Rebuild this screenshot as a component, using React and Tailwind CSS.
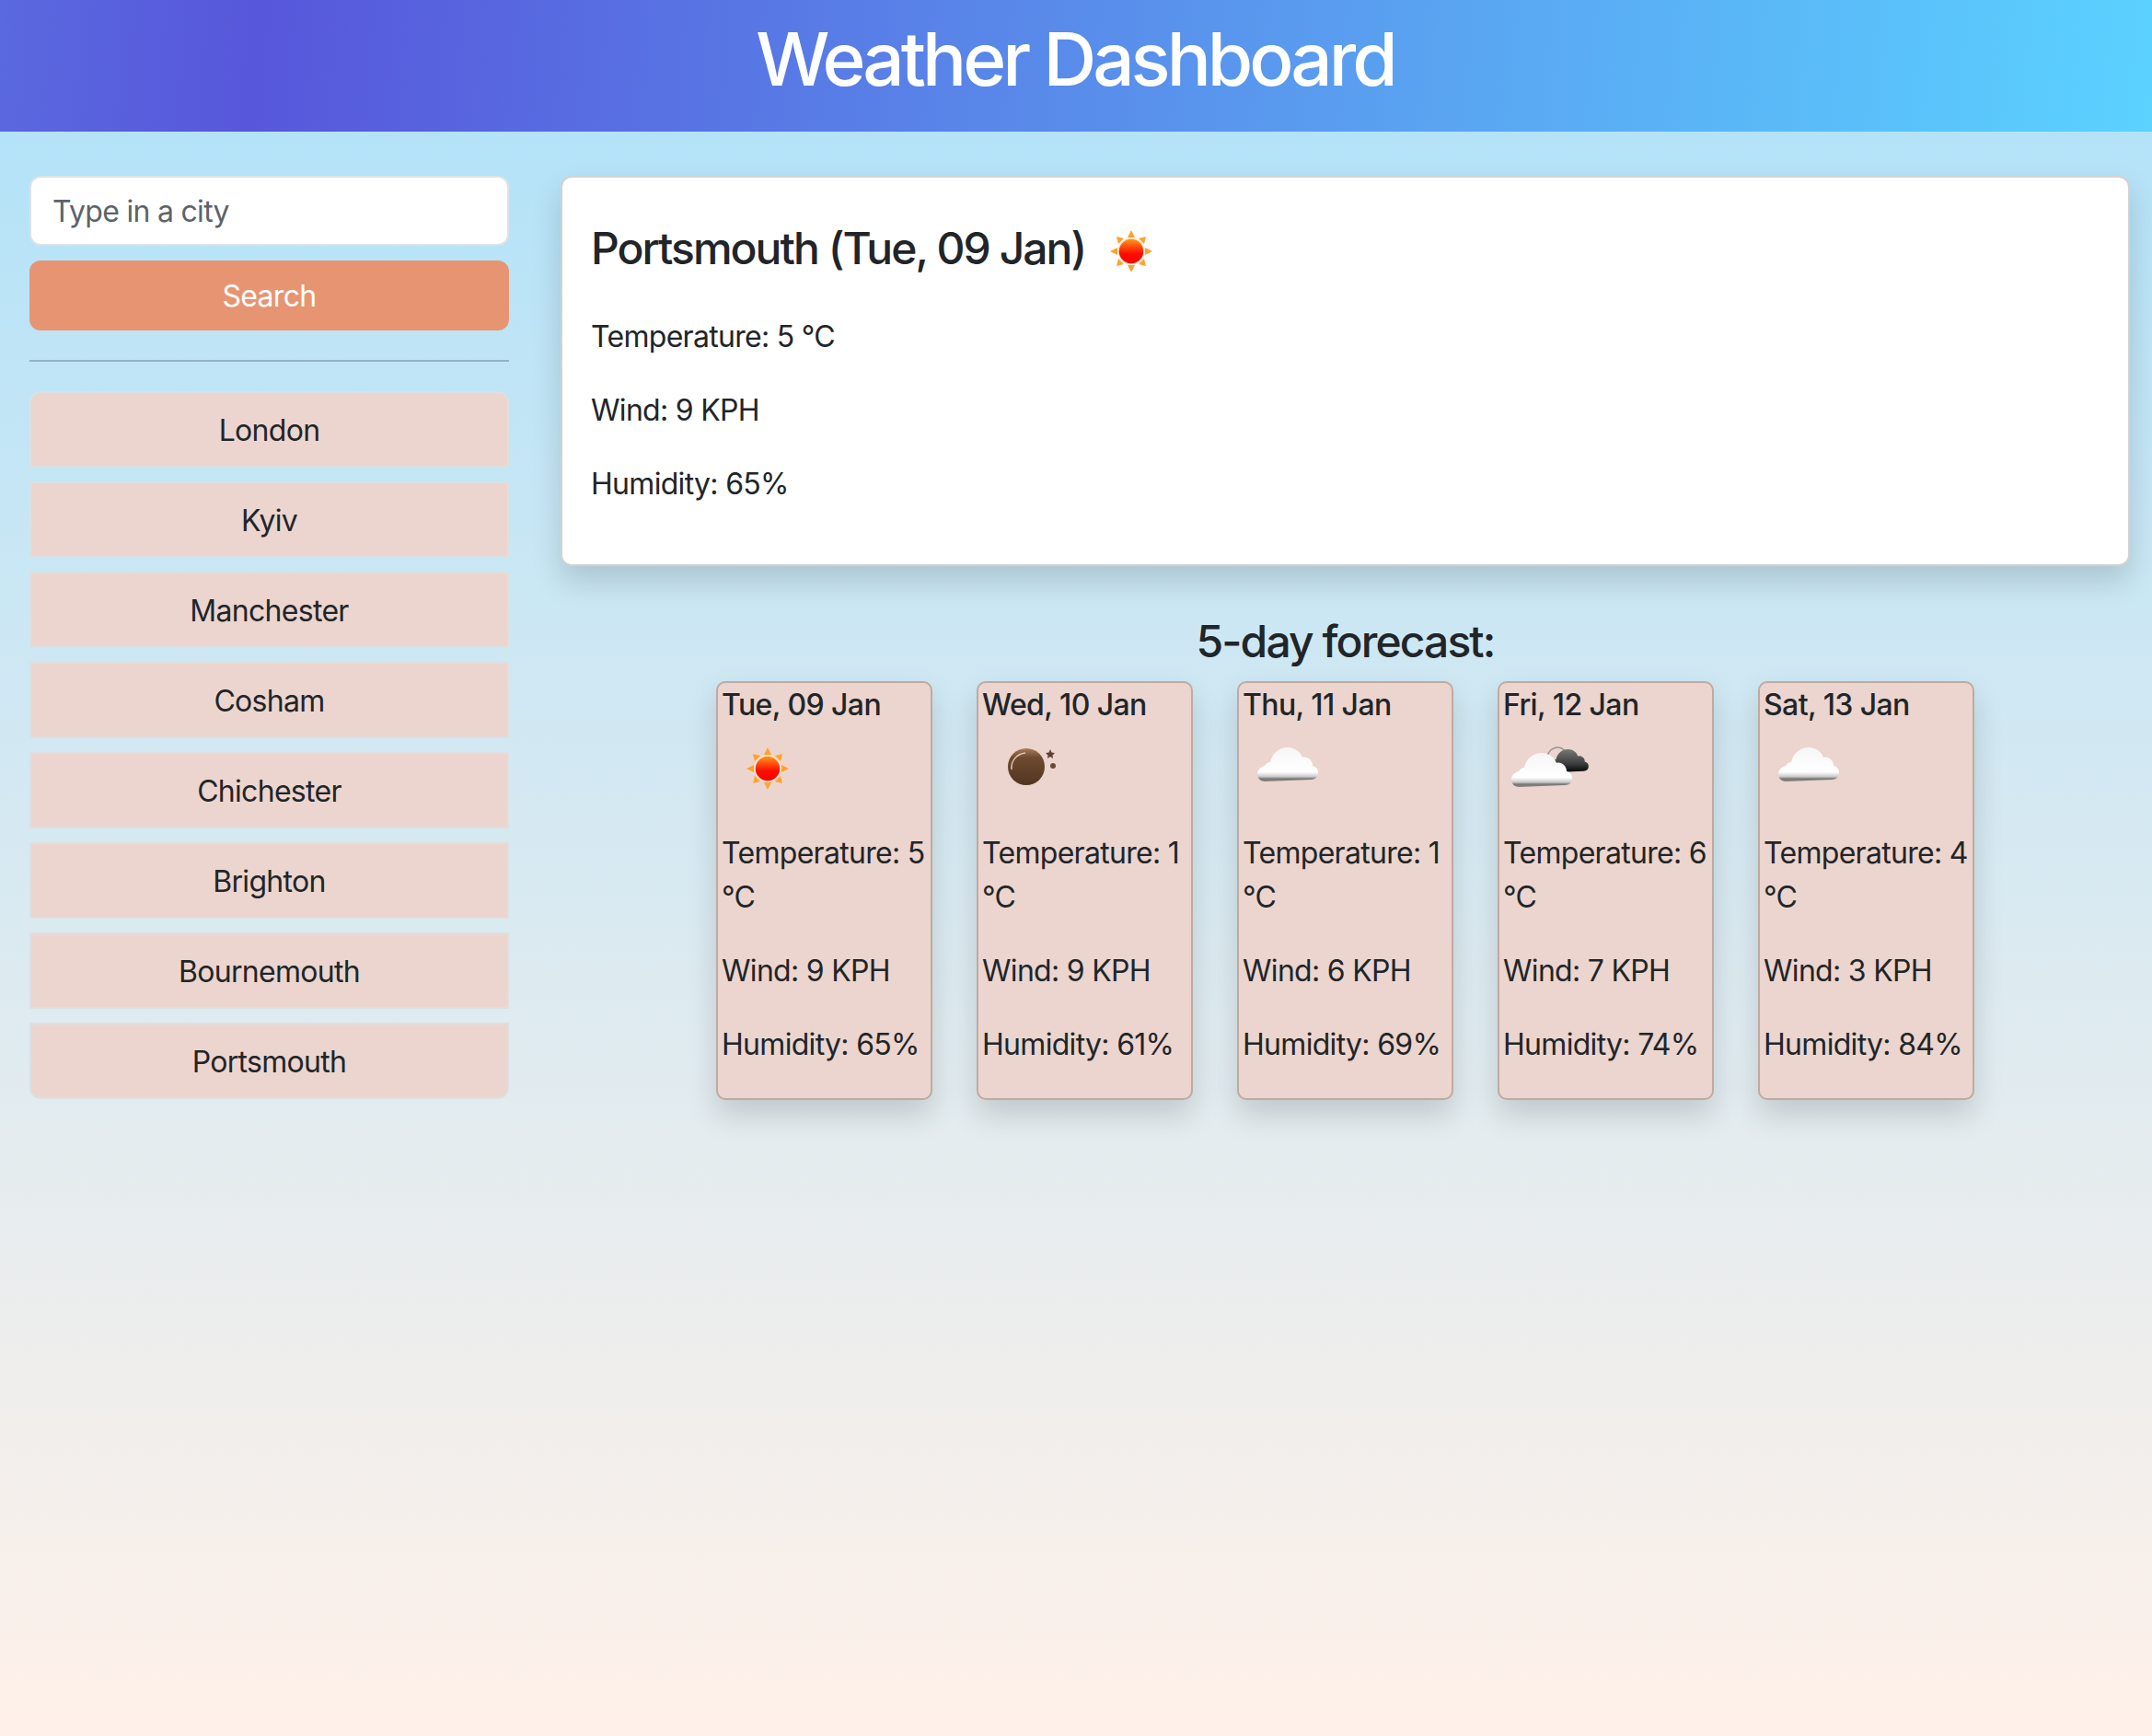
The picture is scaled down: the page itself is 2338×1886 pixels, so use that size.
import React from 'react'

const CITIES = ['London', 'Kyiv', 'Manchester', 'Cosham', 'Chichester', 'Brighton', 'Bournemouth', 'Portsmouth']

const FORECAST = [
  { date: 'Tue, 09 Jan', icon: 'sun', temp: 5, wind: 9, humidity: 65 },
  { date: 'Wed, 10 Jan', icon: 'moon', temp: 1, wind: 9, humidity: 61 },
  { date: 'Thu, 11 Jan', icon: 'cloud', temp: 1, wind: 6, humidity: 69 },
  { date: 'Fri, 12 Jan', icon: 'clouds', temp: 6, wind: 7, humidity: 74 },
  { date: 'Sat, 13 Jan', icon: 'cloud', temp: 4, wind: 3, humidity: 84 },
]

const CLOUD_PATH = 'M8 37c-5 0-8-4-8-8 0-5 4-8 8-9 1-2 3-4 6-4 2-9 9-16 19-16 8 0 14 5 16 11 3-1 6 0 8 2 2 2 3 4 3 7 4 1 6 4 6 7 0 5-3 8-8 8z'

function WeatherIcon({ type }) {
  return (
    <svg viewBox="0 0 100 100" className="w-[100px] h-[100px] shrink-0 blur-[0.6px]">
      <defs>
        <linearGradient id="sunFill" x1="0" y1="0" x2="0" y2="1">
          <stop offset="0" stopColor="#ff9d1e" />
          <stop offset="0.6" stopColor="#ff0a00" />
          <stop offset="1" stopColor="#ff0000" />
        </linearGradient>
        <linearGradient id="moonFill" x1="0" y1="0" x2="0" y2="1">
          <stop offset="0" stopColor="#a97c58" />
          <stop offset="0.25" stopColor="#6e4a30" />
          <stop offset="1" stopColor="#523522" />
        </linearGradient>
        <linearGradient id="cloudFill" x1="0" y1="0" x2="0" y2="1">
          <stop offset="0" stopColor="#f6f6f6" />
          <stop offset="0.72" stopColor="#ffffff" />
          <stop offset="0.86" stopColor="#c9c9c9" />
          <stop offset="0.92" stopColor="#777777" />
          <stop offset="1" stopColor="#8c8480" />
        </linearGradient>
        <linearGradient id="darkFill" x1="0" y1="0" x2="0" y2="1">
          <stop offset="0" stopColor="#777777" />
          <stop offset="0.6" stopColor="#404040" />
          <stop offset="1" stopColor="#050505" />
        </linearGradient>
      </defs>

      {type === 'sun' && (
        <g>
          <g fill="#ffa22e">
            <polygon points="50,27 54,35 46,35" />
            <polygon points="50,73 54,65 46,65" />
            <polygon points="27,50 35,46 35,54" />
            <polygon points="73,50 65,46 65,54" />
            <polygon points="34,34 42,36 36,42" />
            <polygon points="66,34 58,36 64,42" />
            <polygon points="34,66 42,64 36,58" />
            <polygon points="66,66 58,64 64,58" />
          </g>
          <circle cx="50" cy="50" r="14" fill="url(#sunFill)" stroke="#ffe6c4" strokeWidth="1.5" />
        </g>
      )}

      {type === 'moon' && (
        <g transform="translate(2 1)">
          <circle cx="46" cy="47" r="20" fill="url(#moonFill)" />
          <path d="M30 50c-1-10 6-17 15-18" fill="none" stroke="#e6c8ad" strokeWidth="1.4" />
          <polygon points="72,28 73.5,31.5 77,32 74.5,34.5 75,38 72,36 69,38 69.5,34.5 67,32 70.5,31.5" fill="#5f4130" />
          <circle cx="75" cy="46" r="3" fill="#6b4a36" />
        </g>
      )}

      {type === 'cloud' && (
        <g transform="translate(16 27)">
          <path d={CLOUD_PATH} fill="url(#cloudFill)" />
        </g>
      )}

      {type === 'clouds' && (
        <g transform="translate(1 1)">
          <path d="M47 36c1-6 6-10 11-10 4 0 7 2 9 5" fill="none" stroke="#9a9490" strokeWidth="1.5" />
          <g transform="translate(47 28) scale(0.68)">
            <path d={CLOUD_PATH} fill="url(#darkFill)" />
          </g>
          <g transform="translate(8 32)">
            <path d={CLOUD_PATH} fill="url(#cloudFill)" />
          </g>
        </g>
      )}
    </svg>
  )
}

function ForecastCard({ day }) {
  return (
    <div className="w-[235px] h-[455px] border-2 border-[#bfaaa1] rounded-[10px] bg-[#ecd5ce] px-[4px] shadow-[0_16px_32px_rgba(0,0,0,0.15)]">
      <h5 className="text-[32px] leading-[38px] font-medium tracking-[-0.6px] whitespace-nowrap mt-[5px]">{day.date}</h5>
      <div className="mb-[18px]">
        <WeatherIcon type={day.icon} />
      </div>
      <p className="mb-[32px]">Temperature: {day.temp} °C</p>
      <p className="mb-[32px]">Wind: {day.wind} KPH</p>
      <p className="whitespace-nowrap">Humidity: {day.humidity}%</p>
    </div>
  )
}

export default function App() {
  return (
    <div className="min-h-[1886px] bg-gradient-to-b from-[#ade1f9] to-[#fff1e9] text-[#212529] text-[32px] leading-[48px] tracking-[-0.7px] font-['Inter',sans-serif]">
      {/* Header */}
      <header className="h-[143px] flex items-center justify-center bg-[linear-gradient(95deg,#5a69df_0%,#5757db_12%,#5bd2ff_100%)]">
        <h1 className="text-[80px] leading-[96px] font-medium text-white tracking-[-4px] pb-[16px] pr-[2px]">Weather Dashboard</h1>
      </header>

      <div className="flex pt-[48px] pl-[32px] pr-[24px] gap-[56px]">
        {/* Search and history */}
        <aside className="w-[521px] shrink-0">
          <input
            placeholder="Type in a city"
            className="w-full h-[76px] px-[23px] bg-white border-2 border-[#dee2e6] rounded-[12px] outline-none placeholder:text-[#5c636a]"
          />
          <button className="w-full h-[76px] mt-[16px] pt-[2px] rounded-[12px] bg-[#e79473] text-white">Search</button>
          <hr className="mt-[32px] mb-[32px] border-t-2 border-[#93b1c6]" />
          <ul className="flex flex-col gap-[15px]">
            {CITIES.map((city, i) => (
              <li
                key={city}
                className={`h-[83px] pt-[3px] flex items-center justify-center bg-[#ecd5ce] border-2 border-[#dbe0e2] ${
                  i === 0 ? 'rounded-t-[12px]' : ''
                } ${i === CITIES.length - 1 ? 'rounded-b-[12px]' : ''}`}
              >
                {city}
              </li>
            ))}
          </ul>
        </aside>

        {/* Current weather and forecast */}
        <main className="flex-1">
          <section className="h-[424px] bg-white border-2 border-[#d2d2d2] rounded-[12px] px-[31px] pt-[30px] shadow-[0_16px_32px_rgba(0,0,0,0.15)]">
            <div className="flex items-start h-[103px] mb-[16px]">
              <h3 className="text-[48px] leading-[58px] font-medium tracking-[-1.95px] mt-[18px] whitespace-nowrap">Portsmouth (Tue, 09 Jan)</h3>
              <WeatherIcon type="sun" />
            </div>
            <p className="mb-[32px]">Temperature: 5 °C</p>
            <p className="mb-[32px]">Wind: 9 KPH</p>
            <p>Humidity: 65%</p>
          </section>

          <h4 className="mt-[53px] mb-[14px] text-center text-[48px] leading-[58px] font-medium tracking-[-1.9px]">5-day forecast:</h4>
          <div className="flex justify-center gap-[48px]">
            {FORECAST.map((day) => (
              <ForecastCard key={day.date} day={day} />
            ))}
          </div>
        </main>
      </div>
    </div>
  )
}
